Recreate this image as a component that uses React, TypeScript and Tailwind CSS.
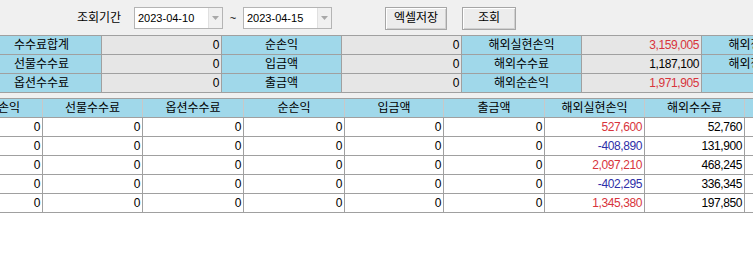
import React from 'react';

type Tone = 'red' | 'blue' | 'plain';

interface SummaryCell {
  label: string;
  value?: string;
  tone?: Tone;
}

const summaryRows: SummaryCell[][] = [
  [
    { label: '수수료합계', value: '0' },
    { label: '순손익', value: '0' },
    { label: '해외실현손익', value: '3,159,005', tone: 'red' },
    { label: '해외정산손익' },
  ],
  [
    { label: '선물수수료', value: '0' },
    { label: '입금액', value: '0' },
    { label: '해외수수료', value: '1,187,100' },
    { label: '해외정산금액' },
  ],
  [
    { label: '옵션수수료', value: '0' },
    { label: '출금액', value: '0' },
    { label: '해외순손익', value: '1,971,905', tone: 'red' },
    { label: '' },
  ],
];

// 그리드 컬럼 (첫 컬럼은 왼쪽으로 스크롤되어 잘려 있음)
const columns = [
  { title: '국내순손익', width: 'w-[100px]' },
  { title: '선물수수료', width: 'w-[100px]' },
  { title: '옵션수수료', width: 'w-[101px]' },
  { title: '순손익', width: 'w-[101px]' },
  { title: '입금액', width: 'w-[99px]' },
  { title: '출금액', width: 'w-[101px]' },
  { title: '해외실현손익', width: 'w-[100px]' },
  { title: '해외수수료', width: 'w-[100px]' },
  { title: '해외순손익', width: 'w-[100px]' },
];

const gridRows: { pnl: string; tone: Tone; fee: string; net: string }[] = [
  { pnl: '527,600', tone: 'red', fee: '52,760', net: '474,840' },
  { pnl: '-408,890', tone: 'blue', fee: '131,900', net: '-540,790' },
  { pnl: '2,097,210', tone: 'red', fee: '468,245', net: '1,628,965' },
  { pnl: '-402,295', tone: 'blue', fee: '336,345', net: '-738,640' },
  { pnl: '1,345,380', tone: 'red', fee: '197,850', net: '1,147,530' },
];

const toneClass = (tone?: Tone) =>
  tone === 'red' ? 'text-[#d8343c]' : tone === 'blue' ? 'text-[#2e2ea8]' : 'text-black';

const DateBox = ({ value }: { value: string }) => (
  <div className="flex h-[22px] w-[89px] items-stretch border border-[#b4b4b4] bg-white">
    <span className="flex flex-1 items-center pl-[3px] text-[11px]">{value}</span>
    <span className="flex w-[14px] items-center justify-center border-l border-[#e0e0e0] bg-[#f0f0f0]">
      <svg width="7" height="4" viewBox="0 0 7 4">
        <path d="M0 0h7L3.5 4z" fill="#a8a8a8" />
      </svg>
    </span>
  </div>
);

const Button = ({ text, width }: { text: string; width: string }) => (
  <button
    className={`flex h-[23px] ${width} items-center justify-center border border-[#a6a6a6] bg-[#ececec] text-[12px] shadow-[inset_1px_1px_0_#ffffff,inset_-1px_-1px_0_#d0d0d0]`}
  >
    {text}
  </button>
);

export default function App() {
  return (
    <div className="h-[267px] w-[753px] overflow-hidden bg-white font-['Liberation_Sans','Noto_Sans_CJK_KR',sans-serif] text-[12px] text-black">
      {/* 조회 조건 */}
      <div className="flex h-[35px] items-center bg-[#f0f0f0] pt-[1px]">
        <span className="ml-[77px] w-[57px]">조회기간</span>
        <DateBox value="2023-04-10" />
        <span className="w-[20px] text-center text-[11px]">~</span>
        <DateBox value="2023-04-15" />
        <div className="ml-[53px] flex gap-[15px]">
          <Button text="엑셀저장" width="w-[62px]" />
          <Button text="조회" width="w-[54px]" />
        </div>
      </div>

      {/* 합계 영역 */}
      <div className="overflow-hidden bg-[#f0f0f0]">
        <div className="ml-[-18px] w-max border-t border-[#a0a0a0]">
          {summaryRows.map((row, ri) => (
            <div key={ri} className="flex h-[19px] border-b border-[#a0a0a0]">
              {row.map((cell, ci) => (
                <React.Fragment key={ci}>
                  <div className="flex w-[120px] items-center justify-center border-r border-[#a0a0a0] bg-[#a0d8ea]">
                    {cell.label}
                  </div>
                  {cell.value !== undefined && (
                    <div
                      className={`flex w-[120px] items-center justify-end border-r border-[#a0a0a0] bg-[#e6e6e6] pr-[2px] tracking-[-0.4px] ${toneClass(cell.tone)}`}
                    >
                      {cell.value}
                    </div>
                  )}
                </React.Fragment>
              ))}
            </div>
          ))}
        </div>
        <div className="h-[5px]" />
      </div>

      {/* 내역 그리드 */}
      <div className="overflow-hidden">
        <div className="ml-[-57px] w-max border-t border-[#a0a0a0]">
          <div className="flex h-[19px] border-b border-[#a0a0a0] bg-[#a0d8ea]">
            {columns.map((col) => (
              <div
                key={col.title}
                className={`flex ${col.width} items-center justify-center border-r border-[#c8c8c8]`}
              >
                {col.title}
              </div>
            ))}
          </div>
          {gridRows.map((r, ri) => {
            const values: { v: string; tone?: Tone }[] = [
              { v: '0' },
              { v: '0' },
              { v: '0' },
              { v: '0' },
              { v: '0' },
              { v: '0' },
              { v: r.pnl, tone: r.tone },
              { v: r.fee },
              { v: r.net },
            ];
            return (
              <div key={ri} className="flex h-[19px] border-b border-[#a0a0a0]">
                {values.map((c, ci) => (
                  <div
                    key={ci}
                    className={`flex ${columns[ci].width} items-center justify-end border-r border-[#a0a0a0] pr-[2px] tracking-[-0.4px] ${toneClass(c.tone)}`}
                  >
                    {c.v}
                  </div>
                ))}
              </div>
            );
          })}
        </div>
      </div>
    </div>
  );
}
